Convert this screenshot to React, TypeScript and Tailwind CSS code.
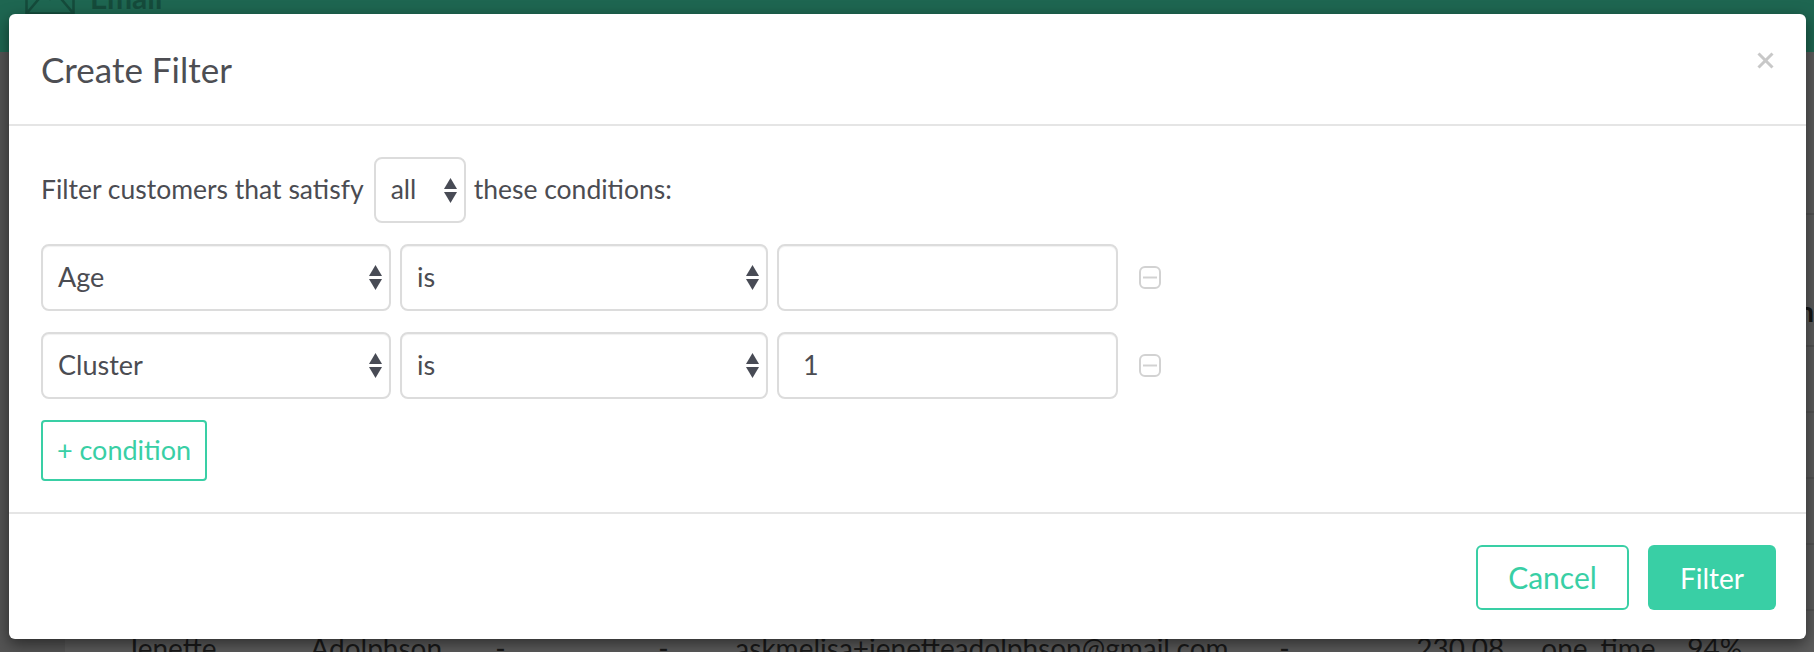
import React from "react";

const TEAL = "#39cfa5";

function Arrows() {
  return (
    <svg width="13" height="25" viewBox="0 0 13 25" className="shrink-0">
      <polygon points="6.5,0 13,11 0,11" fill="#484b55" />
      <polygon points="0,14 13,14 6.5,25" fill="#484b55" />
    </svg>
  );
}

function Select({ label, width }: { label: string; width: string }) {
  return (
    <div
      className={`flex items-center justify-between h-[67px] ${width} rounded-[8px] border-2 border-[#dcdcdc] bg-white pl-[15px] pr-[7px] shadow-[inset_0_1px_1px_rgba(0,0,0,0.06)] text-[27px] text-[#4b4c52]`}
    >
      <span>{label}</span>
      <Arrows />
    </div>
  );
}

function MinusIcon() {
  return (
    <svg width="22" height="23" viewBox="0 0 22 23" className="shrink-0">
      <rect x="1" y="1" width="20" height="21" rx="5" fill="none" stroke="#d2d2d2" strokeWidth="2" />
      <line x1="4" y1="11.5" x2="18" y2="11.5" stroke="#d2d2d2" strokeWidth="2" />
    </svg>
  );
}

function ConditionRow({ field, value }: { field: string; value: string }) {
  return (
    <div className="flex items-center">
      <div className="w-[350px]">
        <Select label={field} width="w-[350px]" />
      </div>
      <div className="ml-[9px]">
        <Select label="is" width="w-[368px]" />
      </div>
      <div className="ml-[9px] flex items-center h-[67px] w-[341px] rounded-[8px] border-2 border-[#dcdcdc] bg-white pl-[24px] shadow-[inset_0_1px_1px_rgba(0,0,0,0.06)] text-[27px] text-[#4b4c52]">
        {value}
      </div>
      <div className="ml-[21px] flex items-center">
        <MinusIcon />
      </div>
    </div>
  );
}

function Envelope() {
  return (
    <svg width="50" height="36" viewBox="0 0 50 36" fill="none" stroke="#154b3b" strokeWidth="2.5">
      <rect x="1.5" y="1.5" width="47" height="33" />
      <polyline points="1.5,1.5 25,20 48.5,1.5" />
      <line x1="1.5" y1="34.5" x2="18" y2="15" />
      <line x1="48.5" y1="34.5" x2="32" y2="15" />
    </svg>
  );
}

const bodyCells: [string, string][] = [
  ["Jenette", "w-[184px]"],
  ["Adolphson", "w-[185px]"],
  ["-", "w-[163px]"],
  ["-", "w-[77px]"],
  ["askmelisa+jenetteadolphson@gmail.com", "w-[544px]"],
  ["-", "w-[137px]"],
  ["230.08", "w-[125px]"],
  ["one_time", "w-[146px]"],
  ["94%", "w-[120px]"],
];

export default function App() {
  return (
    <div className="relative w-[1814px] h-[652px] overflow-hidden bg-[#5c5c5c] font-['Lato',sans-serif]">
      {/* background page (dimmed) */}
      <div className="h-[52px] bg-[#1e6651] pl-[25px] overflow-hidden">
        <div className="-mt-[21px] flex items-end gap-[15px]">
          <Envelope />
          <span className="text-[30px] font-bold text-[#154b3b] leading-none mb-[3px]">Email</span>
        </div>
      </div>
      <div className="flex">
        <div className="w-[66px] h-[600px] bg-[#545454]" />
        <div className="flex-1">
          <div className="h-[161px]" />
          <div className="h-[134px] border-t-2 border-b-2 border-[#515151] flex items-end pb-[20px] pl-[1626px]">
            <span className="text-[28px] font-bold text-[#151515] leading-none">Retention</span>
          </div>
          {[0, 1, 2, 3].map((i) => (
            <div key={i} className="h-[66px] border-b-2 border-[#535353]" />
          ))}
          <div className="h-[67px] flex items-center pl-[61px] pt-[6px] text-[28px] text-[#1a1a1a]">
            {bodyCells.map(([t, w], i) => (
              <span key={i} className={`${w} shrink-0`}>
                {t}
              </span>
            ))}
          </div>
        </div>
      </div>

      {/* modal */}
      <div className="absolute left-[9px] top-[14px] w-[1797px] h-[625px] rounded-[6px] bg-white shadow-[0_5px_15px_rgba(0,0,0,0.5)] flex flex-col">
        <div className="h-[112px] shrink-0 border-b-2 border-[#e5e5e5] flex items-center justify-between pl-[32px] pr-[32px]">
          <span className="text-[35px] text-[#4d4e53] leading-none">Create Filter</span>
          <svg width="17" height="17" viewBox="0 0 17 17" className="mb-[18px]">
            <line x1="1.5" y1="1.5" x2="15.5" y2="15.5" stroke="#c8c8c8" strokeWidth="3" />
            <line x1="15.5" y1="1.5" x2="1.5" y2="15.5" stroke="#c8c8c8" strokeWidth="3" />
          </svg>
        </div>

        <div className="flex-1 px-[32px] pt-[31px] flex flex-col">
          <div className="flex items-center text-[26.5px] text-[#4b4c52]">
            <span>Filter customers that satisfy</span>
            <div className="ml-[10px] mr-[8px] flex items-center justify-between h-[66px] w-[92px] rounded-[8px] border-2 border-[#dcdcdc] bg-white pl-[15px] pr-[7px]">
              <span>all</span>
              <Arrows />
            </div>
            <span>these conditions:</span>
          </div>
          <div className="mt-[21px] flex flex-col gap-[21px]">
            <ConditionRow field="Age" value="" />
            <ConditionRow field="Cluster" value="1" />
          </div>
          <div className="mt-[21px]">
            <button
              className="h-[61px] w-[166px] rounded-[4px] border-2 text-[27px] flex items-center justify-center"
              style={{ borderColor: TEAL, color: TEAL }}
            >
              + condition
            </button>
          </div>
        </div>

        <div className="h-[127px] shrink-0 border-t-2 border-[#e5e5e5] flex items-center justify-end pr-[30px] pt-[2px]">
          <button className="h-[65px] w-[153px] rounded-[6px] border-2 border-[#39cfa5] text-[#39cfa5] text-[30px] flex items-center justify-center">
            Cancel
          </button>
          <button className="ml-[19px] h-[65px] w-[128px] rounded-[6px] bg-[#39cfa5] text-white text-[28px] flex items-center justify-center">
            Filter
          </button>
        </div>
      </div>
    </div>
  );
}
